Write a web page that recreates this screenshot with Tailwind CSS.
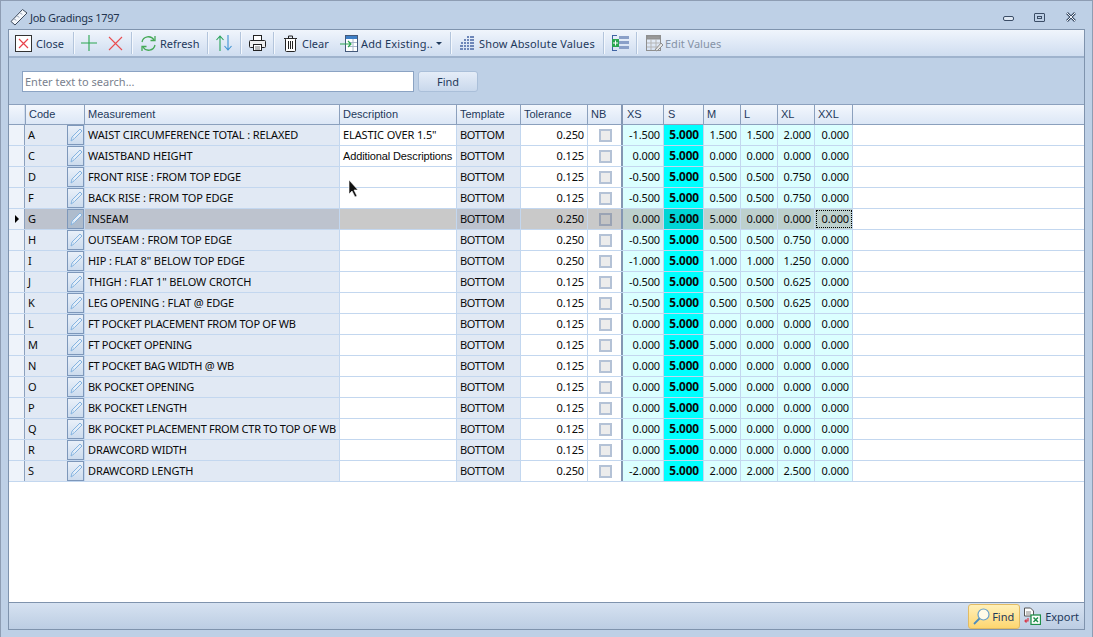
<!DOCTYPE html>
<html lang="en">
<head>
<meta charset="UTF-8">
<title>Job Gradings 1797</title>
<script src="https://cdn.jsdelivr.net/npm/@tailwindcss/browser@4"></script>
</head>
<body class="bg-[#bed0e6]">
<div class="w-[1093px] h-[637px] flex flex-col overflow-hidden border-t border-l border-r border-[#8e9db3] bg-[#bed0e6] font-['Noto_Sans','Liberation_Sans',sans-serif] text-[11px] text-[#1e395b] leading-none">

  <!-- title bar -->
  <div class="h-[28px] shrink-0 flex items-center pl-[9px] pr-[15px] pt-[4px]">
    <svg width="18" height="18" viewBox="0 0 18 18" class="mr-[2px]"><path d="M1 13.500 L12.500 1.500 L17 5 L5 17 Z" fill="#f4f7fb" stroke="#3d4a5c"/><path d="M4.500 11l1.500 1.500M7.500 8l1.500 1.500M10.500 5l1.500 1.500" stroke="#7a8aa0"/></svg>
    <span class="text-[#22344f] tracking-[-0.3px]">Job Gradings 1797</span>
    <div class="ml-auto flex items-center text-[#3b4d66]">
      <span class="w-[11px] h-[5px] border border-[#3b4d66] rounded-[2px] bg-white/50 mt-[3px]"></span>
      <span class="w-[11px] h-[9px] border border-[#3b4d66] rounded-[1px] ml-[20px] flex items-center justify-center"><span class="w-[5px] h-[3px] border border-[#3b4d66]"></span></span>
      <svg width="12" height="10" viewBox="0 0 12 10" class="ml-[20px]"><path d="M2 1 L10 9 M10 1 L2 9" stroke="#3b4d66" stroke-width="2.500"/><path d="M2 1 L10 9 M10 1 L2 9" stroke="#f2f5fa" stroke-width="1"/></svg>
    </div>
  </div>

  <!-- main window -->
  <div class="mx-[7px] h-[601px] border border-[#7f93ad] flex flex-col">

    <!-- toolbar -->
    <div class="h-[28px] shrink-0 flex items-center border-b-[2px] border-[#9fb3cd] bg-gradient-to-b from-[#f0f5fc] to-[#cfddf0] text-[#1e395b]">
      <div class="w-[64px] pl-[6px] flex items-center gap-[4px] shrink-0">
        <svg width="17" height="17" viewBox="0 0 17 17"><rect x="0.500" y="0.500" width="16" height="16" fill="#fff" stroke="#333"/><path d="M4 4l9 9M13 4l-9 9" stroke="#e8434b" stroke-width="1.200"/></svg><span>Close</span>
      </div>
      <div class="w-[2px] h-[22px] bg-[#f4f8fd] border-l border-[#b3c5dc] shrink-0"></div>
      <div class="w-[56px] pl-[6px] flex items-center gap-[11px] shrink-0">
        <svg width="16" height="16" viewBox="0 0 16 16"><path d="M8 0v16M0 8h16" stroke="#2aa650" stroke-width="1.100"/></svg>
        <svg width="15" height="15" viewBox="0 0 15 15"><path d="M1 1l13 13M14 1l-13 13" stroke="#ea4d4f" stroke-width="1.100"/></svg>
      </div>
      <div class="w-[2px] h-[22px] bg-[#f4f8fd] border-l border-[#b3c5dc] shrink-0"></div>
      <div class="w-[74px] pl-[7px] flex items-center gap-[3px] shrink-0">
        <svg width="17" height="17" viewBox="0 0 17 17" fill="none" stroke="#45a956" stroke-width="1.300"><path d="M2 7a6.500 6.500 0 0 1 12-2"/><path d="M15 1v4.500h-4.500"/><path d="M15 10a6.500 6.500 0 0 1-12 2"/><path d="M2 16v-4.500h4.500"/></svg><span>Refresh</span>
      </div>
      <div class="w-[2px] h-[22px] bg-[#f4f8fd] border-l border-[#b3c5dc] shrink-0"></div>
      <div class="w-[31px] pl-[7px] flex items-center shrink-0">
        <svg width="16" height="16" viewBox="0 0 16 16" fill="none" stroke-width="1.100"><path d="M4 16V1M0.500 5L4 1l3.500 4" stroke="#28a35a"/><path d="M12 0v15M8.500 11L12 15l3.500-4" stroke="#3f93d3"/></svg>
      </div>
      <div class="w-[2px] h-[22px] bg-[#f4f8fd] border-l border-[#b3c5dc] shrink-0"></div>
      <div class="w-[31px] pl-[7px] flex items-center shrink-0">
        <svg width="17" height="16" viewBox="0 0 17 16" fill="none" stroke="#222"><rect x="4.500" y="0.500" width="8" height="5" fill="#fff"/><rect x="0.500" y="5.500" width="16" height="7" rx="1" fill="#eee"/><rect x="4.500" y="9.500" width="8" height="6" fill="#fff"/><path d="M6 12h5M6 14h5" stroke="#777"/></svg>
      </div>
      <div class="w-[2px] h-[22px] bg-[#f4f8fd] border-l border-[#b3c5dc] shrink-0"></div>
      <div class="w-[65px] pl-[9px] flex items-center gap-[5px] shrink-0">
        <svg width="13" height="17" viewBox="0 0 13 17" fill="none" stroke="#222"><path d="M0 3.500h13M4.500 3V1h4v2"/><rect x="1.500" y="3.500" width="10" height="13" rx="1" fill="#fff"/><path d="M4.500 6v8M6.500 6v8M8.500 6v8"/></svg><span>Clear</span>
      </div>
      <div class="w-[110px] flex items-center gap-[3px] shrink-0">
        <svg width="18" height="17" viewBox="0 0 18 17" fill="none"><rect x="5.500" y="0.500" width="12" height="16" fill="#fff" stroke="#44597a"/><rect x="6" y="1" width="11" height="3" fill="#3d7fc7"/><path d="M9 7.500h8M9 11.500h8M13 4v12" stroke="#a9b8cc"/><path d="M0 9h11M8 6l3 3-3 3" stroke="#2aa650" stroke-width="1.200"/></svg><span class="tracking-[0.15px]">Add Existing..</span>
        <span class="w-0 h-0 border-l-[3px] border-r-[3px] border-t-[3px] border-l-transparent border-r-transparent border-t-[#1e395b]"></span>
      </div>
      <div class="w-[2px] h-[22px] bg-[#f4f8fd] border-l border-[#b3c5dc] shrink-0"></div>
      <div class="w-[151px] pl-[7px] flex items-center gap-[4px] shrink-0">
        <svg width="16" height="16" viewBox="0 0 16 16" fill="#6d86b8"><rect x="8" y="1" width="2" height="2"/><rect x="11" y="1" width="4" height="2"/><rect x="5" y="4" width="2" height="2"/><rect x="8" y="4" width="2" height="2"/><rect x="11" y="4" width="4" height="2"/><rect x="2" y="7" width="2" height="2"/><rect x="5" y="7" width="2" height="2"/><rect x="8" y="7" width="2" height="2"/><rect x="11" y="7" width="4" height="2"/><rect x="1" y="10" width="3" height="2"/><rect x="5" y="10" width="2" height="2"/><rect x="8" y="10" width="2" height="2"/><rect x="11" y="10" width="4" height="2"/><rect x="1" y="13" width="3" height="2"/><rect x="5" y="13" width="2" height="2"/><rect x="8" y="13" width="2" height="2"/><rect x="11" y="13" width="4" height="2"/></svg><span class="tracking-[0.15px]">Show Absolute Values</span>
      </div>
      <div class="w-[2px] h-[22px] bg-[#f4f8fd] border-l border-[#b3c5dc] shrink-0"></div>
      <div class="w-[31px] pl-[7px] flex items-center shrink-0">
        <svg width="17" height="16" viewBox="0 0 17 16"><rect x="7" y="1" width="10" height="3" fill="#8aa0c8"/><rect x="7" y="6" width="10" height="3" fill="#8aa0c8"/><rect x="7" y="11" width="10" height="3" fill="#8aa0c8"/><path d="M1 .500h4M1 15.500h4M.500 0v4M.500 12v4" stroke="#3f63a3"/><rect x="0" y="4" width="7" height="8" fill="#2aa650"/><path d="M3.500 5.500v5M1 8h5" stroke="#fff"/></svg>
      </div>
      <div class="w-[2px] h-[22px] bg-[#f4f8fd] border-l border-[#b3c5dc] shrink-0"></div>
      <div class="pl-[8px] flex items-center gap-[2px] shrink-0 text-[#8593a6]">
        <svg width="17" height="17" viewBox="0 0 17 17" fill="none" stroke="#8f8f8f"><rect x="0.500" y="0.500" width="14" height="15"/><rect x="1" y="1" width="13" height="3" fill="#9a9a9a"/><path d="M1 8h13M1 12h13M5 4v11M10 4v11" stroke="#b5b5b5"/><path d="M9 15l6-7 2 2-6 6z" fill="#e6e6e6"/></svg><span>Edit Values</span>
      </div>
    </div>

    <!-- search panel -->
    <div class="h-[47px] shrink-0 flex items-center pl-[13px] border-b border-[#8ba0bd]">
      <div class="w-[392px] h-[21px] bg-white border border-[#8ba3c3] flex items-center pl-[2px] text-[#79818e]">Enter text to search...</div>
      <button class="w-[60px] h-[21px] ml-[4px] rounded-[3px] border border-[#aabfd9] bg-gradient-to-b from-[#e5edf8] to-[#c9d8ec] text-[#1e395b] text-[11px]">Find</button>
    </div>

    <!-- grid -->
    <div class="flex-1 bg-white flex flex-col min-h-0">
      <div id="head" class="h-[20px] shrink-0 flex border-b border-[#8ba0bd] bg-gradient-to-b from-[#f3f7fd] to-[#dce7f6] font-['Liberation_Sans',sans-serif]">
        <div class="w-[16px] shrink-0 border-r border-[#cfdcee]"></div>
        <div class="w-[60px] shrink-0 pl-[3px] pb-[1px] border-l border-r border-[#8ba0bd] flex items-center">Code</div>
        <div class="w-[255px] shrink-0 pl-[3px] pb-[1px] border-r border-[#8ba0bd] flex items-center">Measurement</div>
        <div class="w-[117px] shrink-0 pl-[3px] pb-[1px] border-r border-[#8ba0bd] flex items-center">Description</div>
        <div class="w-[64px] shrink-0 pl-[3px] pb-[1px] border-r border-[#8ba0bd] flex items-center">Template</div>
        <div class="w-[67px] shrink-0 pl-[3px] pb-[1px] border-r border-[#8ba0bd] flex items-center">Tolerance</div>
        <div class="w-[35px] shrink-0 pl-[3px] pb-[1px] border-r-[2px] border-[#8497b3] flex items-center">NB</div>
        <div class="w-[41px] shrink-0 pl-[4px] pb-[1px] border-r border-[#8ba0bd] flex items-center">XS</div>
        <div class="w-[40px] shrink-0 pl-[4px] pb-[1px] border-r border-[#8ba0bd] flex items-center">S</div>
        <div class="w-[37px] shrink-0 pl-[3px] pb-[1px] border-r border-[#8ba0bd] flex items-center">M</div>
        <div class="w-[37px] shrink-0 pl-[3px] pb-[1px] border-r border-[#8ba0bd] flex items-center">L</div>
        <div class="w-[37px] shrink-0 pl-[3px] pb-[1px] border-r border-[#8ba0bd] flex items-center">XL</div>
        <div class="w-[38px] shrink-0 pl-[3px] pb-[1px] border-r border-[#8ba0bd] flex items-center">XXL</div>
      </div>
      <div id="rows" class="text-[#0a0a0a]"></div>
    </div>

    <!-- bottom bar -->
    <div class="h-[27px] shrink-0 border-t border-[#7f93ad] bg-gradient-to-b from-[#d6e2f1] to-[#bccde3] flex items-center justify-end pr-[5px]">
      <div class="w-[52px] h-[25px] rounded-[3px] border border-[#e2bb63] bg-gradient-to-b from-[#fff0b8] to-[#fdd66f] flex items-center pl-[4px] gap-[2px]">
        <svg width="17" height="17" viewBox="0 0 17 17" fill="none"><circle cx="10.500" cy="6.500" r="5.500" fill="#fffbe8" stroke="#6aa0c8" stroke-width="1.200"/><path d="M6.500 10.500L1 16" stroke="#4d8dbd" stroke-width="1.800"/></svg><span>Find</span>
      </div>
      <div class="flex items-center ml-[3px] gap-[4px]">
        <svg width="18" height="18" viewBox="0 0 18 18" fill="none"><path d="M1.500 1h6l3 3v5h-9z" fill="#fff" stroke="#555"/><path d="M3 5h5M3 7h5" stroke="#888"/><path d="M5 11v3H2M3.500 12.500L2 14l1.500 1.500" stroke="#d8384a" stroke-width="1.200"/><rect x="8" y="8" width="9.500" height="9.500" fill="#fff" stroke="#1f8f4a" stroke-width="1.300"/><path d="M10.500 10.500l4.500 4.500M15 10.500l-4.500 4.500" stroke="#1f8f4a" stroke-width="1.500"/></svg><span>Export</span>
      </div>
    </div>
  </div>
</div>

<script>
  const data = [
    ['A','WAIST CIRCUMFERENCE TOTAL : RELAXED','ELASTIC OVER 1.5"','0.250','-1.500','1.500','1.500','2.000','0.000'],
    ['C','WAISTBAND HEIGHT','Additional Descriptions','0.125','0.000','0.000','0.000','0.000','0.000'],
    ['D','FRONT RISE : FROM TOP EDGE','','0.125','-0.500','0.500','0.500','0.750','0.000'],
    ['F','BACK RISE : FROM TOP EDGE','','0.125','-0.500','0.500','0.500','0.750','0.000'],
    ['G','INSEAM','','0.250','0.000','5.000','0.000','0.000','0.000'],
    ['H','OUTSEAM : FROM TOP EDGE','','0.250','-0.500','0.500','0.500','0.750','0.000'],
    ['I','HIP : FLAT 8" BELOW TOP EDGE','','0.250','-1.000','1.000','1.000','1.250','0.000'],
    ['J','THIGH : FLAT 1" BELOW CROTCH','','0.125','-0.500','0.500','0.500','0.625','0.000'],
    ['K','LEG OPENING : FLAT @ EDGE','','0.125','-0.500','0.500','0.500','0.625','0.000'],
    ['L','FT POCKET PLACEMENT FROM TOP OF WB','','0.125','0.000','0.000','0.000','0.000','0.000'],
    ['M','FT POCKET OPENING','','0.125','0.000','5.000','0.000','0.000','0.000'],
    ['N','FT POCKET BAG WIDTH @ WB','','0.125','0.000','0.000','0.000','0.000','0.000'],
    ['O','BK POCKET OPENING','','0.125','0.000','5.000','0.000','0.000','0.000'],
    ['P','BK POCKET LENGTH','','0.125','0.000','0.000','0.000','0.000','0.000'],
    ['Q','BK POCKET PLACEMENT FROM CTR TO TOP OF WB','','0.125','0.000','5.000','0.000','0.000','0.000'],
    ['R','DRAWCORD WIDTH','','0.125','0.000','0.000','0.000','0.000','0.000'],
    ['S','DRAWCORD LENGTH','','0.250','-2.000','2.000','2.000','2.500','0.000'],
  ];

  const pencil = '<svg width="14" height="16" viewBox="0 0 14 16" fill="none"><path d="M2 14l1-4 8-8 2 2-8 8z" fill="#e4eef9" stroke="#86b4e0"/><path d="M3.500 10l2 2" stroke="#b5d0ea"/></svg>';

  function sizeCell(width, value, selected, last) {
    const bg = selected ? 'bg-[#bdd0cd]' : 'bg-[#dbffff]';
    const focus = last && selected ? ' outline-1 outline-dotted outline-black -outline-offset-2' : '';
    return '<div class="' + width + ' shrink-0 ' + bg + focus + ' border-r border-[#c3d7ef] flex items-center justify-end pr-[3px] pb-[2px]">' + value + '</div>';
  }

  document.getElementById('rows').innerHTML = data.map(r => {
    const sel = r[0] === 'G';
    const shade = sel ? 'bg-[#bdc3ce]' : 'bg-[#e1e9f4]';
    const plain = sel ? 'bg-[#c9c9c9]' : 'bg-white';
    // the POCKET rows run wider in this font than in the original
    const squeeze = r[1].includes('POCKET') ? 'tracking-[-0.28px]' : 'tracking-[-0.12px]';
    let out = '<div class="h-[21px] flex border-b border-[#c3d7ef] tracking-[-0.12px]">';
    out += '<div class="w-[16px] shrink-0 border-r border-[#8ba0bd] flex items-center justify-center bg-[#eef3fa]">';
    if (sel) out += '<span class="w-0 h-0 border-t-[4px] border-b-[4px] border-l-[4px] border-t-transparent border-b-transparent border-l-black"></span>';
    out += '</div>';
    out += '<div class="w-[60px] shrink-0 ' + shade + ' border-r border-[#c3d7ef] flex items-center justify-between pl-[3px]"><span class="pb-[2px]">' + r[0] + '</span>';
    out += '<span class="w-[17px] h-[20px] border border-[#7d97ba] flex items-center justify-center ' + (sel ? 'bg-[#aebccd]' : 'bg-gradient-to-b from-[#e9f0f9] to-[#cddcee]') + '">' + pencil + '</span></div>';
    out += '<div class="w-[255px] shrink-0 ' + shade + ' ' + squeeze + ' border-r border-[#c3d7ef] flex items-center pl-[3px] pb-[2px] whitespace-nowrap">' + r[1] + '</div>';
    out += '<div class="w-[117px] shrink-0 ' + plain + ' border-r border-[#c3d7ef] flex items-center pl-[3px] pb-[2px] whitespace-nowrap">';
    if (r[0] === 'C') out += '<span class="font-[\'Liberation_Sans\',sans-serif] relative top-[1px]">' + r[2] + '</span>';
    else out += r[2];
    out += '</div>';
    out += '<div class="w-[64px] shrink-0 ' + shade + ' tracking-[-0.3px] border-r border-[#c3d7ef] flex items-center pl-[3px] pb-[2px]">BOTTOM</div>';
    out += '<div class="w-[67px] shrink-0 ' + plain + ' border-r border-[#c3d7ef] flex items-center justify-end pr-[3px] pb-[2px]">' + r[3] + '</div>';
    out += '<div class="w-[35px] shrink-0 ' + plain + ' border-r-[2px] border-[#8497b3] flex items-center justify-center pl-[1px]"><span class="w-[13px] h-[13px] border-[2px] ' + (sel ? 'border-[#9aa3b4] bg-[#c4c4c4]' : 'border-[#b4c2d6] bg-[#ececec]') + '"></span></div>';
    out += sizeCell('w-[41px]', r[4], sel, false);
    out += '<div class="w-[40px] shrink-0 font-bold text-[11.8px] border-r border-[#c3d7ef] flex items-center justify-end pr-[4px] pb-[1px] ' + (sel ? 'bg-[#00d5d5]' : 'bg-[#00ffff]') + '">5.000</div>';
    out += sizeCell('w-[37px]', r[5], sel, false);
    out += sizeCell('w-[37px]', r[6], sel, false);
    out += sizeCell('w-[37px]', r[7], sel, false);
    out += sizeCell('w-[38px]', r[8], sel, true);
    return out + '</div>';
  }).join('');
</script>

<!-- mouse cursor caught in the screenshot -->
<svg width="12" height="20" viewBox="0 0 12 20" class="fixed left-[348px] top-[179px]"><path d="M1 1v14l3-3 3 6 2-1-3-6h4z" fill="#111" stroke="#fff" stroke-width="0.600"/></svg>
</body>
</html>
